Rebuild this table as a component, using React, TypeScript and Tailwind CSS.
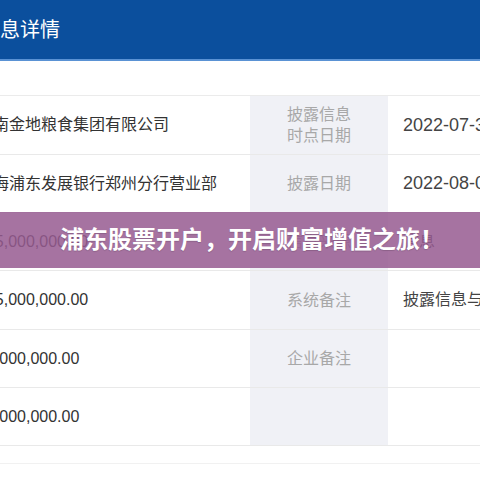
const rows = [
  {
    name: "河南金地粮食集团有限公司",
    label: ["披露信息", "时点日期"],
    value: "2022-07-31",
    h: "h-[59px]",
  },
  {
    name: "上海浦东发展银行郑州分行营业部",
    label: ["披露日期"],
    value: "2022-08-01",
    h: "h-[58px]",
  },
  {
    name: "105,000,000.00",
    label: ["信息来源"],
    value: "信息",
    h: "h-[58px]",
  },
  {
    name: "105,000,000.00",
    label: ["系统备注"],
    value: "披露信息与公告内容一致",
    h: "h-[59px]",
  },
  {
    name: "10,000,000.00",
    label: ["企业备注"],
    value: "",
    h: "h-[58px]",
  },
  {
    name: "10,000,000.00",
    label: [],
    value: "",
    h: "h-[58px]",
  },
];

export default function App() {
  return (
    <div
      className="relative w-[480px] h-[480px] overflow-hidden bg-white"
      style={{ fontFamily: '"Liberation Sans", "Noto Sans CJK SC", sans-serif' }}
    >
      {/* header bar */}
      <div className="h-[61px] bg-[#0b4f9d] border-b-2 border-[#5a92d4] flex items-center">
        <span className="ml-[-20px] text-[20px] text-white whitespace-nowrap">信息详情</span>
      </div>

      <div className="h-[34px]" />

      {/* detail table */}
      <div className="ml-[-23px] w-[503px] border-t border-[#ebebeb]">
        {rows.map((row, i) => (
          <div key={i} className={`${row.h} flex border-b border-[#e9e9e9]`}>
            <div className="w-[273px] shrink-0 overflow-hidden flex items-center text-[16px] text-[#333] whitespace-nowrap">
              {row.name}
            </div>
            <div className="w-[138px] shrink-0 bg-[#f0f1f6] flex flex-col items-center justify-center text-[16px] leading-[21px] text-[#a8a8a8]">
              {row.label.map((l) => (
                <span key={l}>{l}</span>
              ))}
            </div>
            <div
              className={`flex-1 min-w-0 overflow-hidden flex items-center pl-[15px] text-[#444] whitespace-nowrap ${
                row.value.startsWith("20") ? "text-[18px]" : "text-[16px]"
              }`}
            >
              {row.value}
            </div>
          </div>
        ))}
      </div>

      <div className="h-[17px]" />
      <div className="border-t border-[#f1f1f1]" />

      {/* promo banner */}
      <div className="absolute left-0 right-0 top-[212px] h-[56px] pl-[24px] bg-[rgba(150,90,145,0.85)] flex items-center justify-center">
        <span className="text-[24px] font-bold text-white whitespace-nowrap [text-shadow:0_1px_1px_rgba(0,0,0,0.15)]">
          浦东股票开户，开启财富增值之旅！
        </span>
      </div>
    </div>
  );
}
